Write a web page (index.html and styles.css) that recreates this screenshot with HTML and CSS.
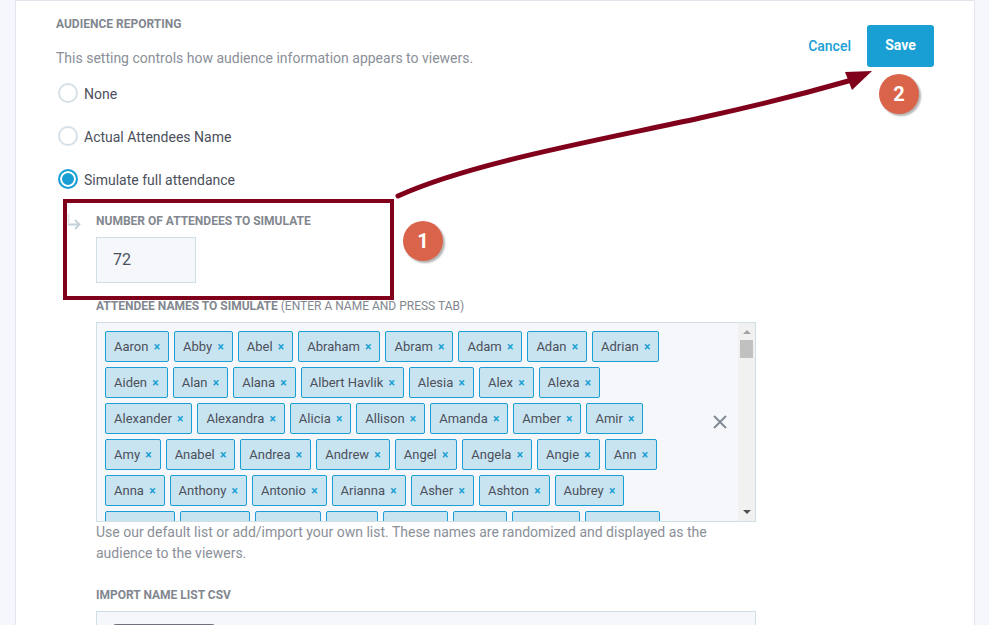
FILE: index.html
```html
<!DOCTYPE html>
<html lang="en">
<head>
<meta charset="utf-8">
<title>Audience Reporting</title>
<link rel="stylesheet" href="styles.css">
</head>
<body>
<main class="panel">
  <div class="content">
    <h2 class="label section-title">AUDIENCE REPORTING</h2>
    <p class="help intro">This setting controls how audience information appears to viewers.</p>
    <div class="radios">
      <div class="radio-row"><span class="radio"></span><span class="radio-text">None</span></div>
      <div class="radio-row"><span class="radio"></span><span class="radio-text">Actual Attendees Name</span></div>
      <div class="radio-row"><span class="radio checked"></span><span class="radio-text">Simulate full attendance</span></div>
    </div>
    <div class="nested">
      <svg class="nest-icon" width="14" height="20" viewBox="0 0 14 20" aria-hidden="true"><path d="M1.500 0V9" fill="none" stroke="#dbe4e9" stroke-width="1.500"/><path d="M1 10.500H12.500M8 6L12.500 10.500L8 15" fill="none" stroke="#c3d2da" stroke-width="1.800"/></svg>
      <div class="nested-body">
        <div class="label">NUMBER OF ATTENDEES TO SIMULATE</div>
        <div class="number-input">72</div>
        <div class="label names-label">ATTENDEE NAMES TO SIMULATE <span class="label-note">(ENTER A NAME AND PRESS TAB)</span></div>
        <div class="tag-box">
          <div class="tags">
            <div class="tag-row"><span class="tag">Aaron <i>×</i></span><span class="tag">Abby <i>×</i></span><span class="tag">Abel <i>×</i></span><span class="tag">Abraham <i>×</i></span><span class="tag">Abram <i>×</i></span><span class="tag">Adam <i>×</i></span><span class="tag">Adan <i>×</i></span><span class="tag">Adrian <i>×</i></span></div>
            <div class="tag-row"><span class="tag">Aiden <i>×</i></span><span class="tag">Alan <i>×</i></span><span class="tag">Alana <i>×</i></span><span class="tag">Albert Havlik <i>×</i></span><span class="tag">Alesia <i>×</i></span><span class="tag">Alex <i>×</i></span><span class="tag">Alexa <i>×</i></span></div>
            <div class="tag-row"><span class="tag">Alexander <i>×</i></span><span class="tag">Alexandra <i>×</i></span><span class="tag">Alicia <i>×</i></span><span class="tag">Allison <i>×</i></span><span class="tag">Amanda <i>×</i></span><span class="tag">Amber <i>×</i></span><span class="tag">Amir <i>×</i></span></div>
            <div class="tag-row"><span class="tag">Amy <i>×</i></span><span class="tag">Anabel <i>×</i></span><span class="tag">Andrea <i>×</i></span><span class="tag">Andrew <i>×</i></span><span class="tag">Angel <i>×</i></span><span class="tag">Angela <i>×</i></span><span class="tag">Angie <i>×</i></span><span class="tag">Ann <i>×</i></span></div>
            <div class="tag-row"><span class="tag">Anna <i>×</i></span><span class="tag">Anthony <i>×</i></span><span class="tag">Antonio <i>×</i></span><span class="tag">Arianna <i>×</i></span><span class="tag">Asher <i>×</i></span><span class="tag">Ashton <i>×</i></span><span class="tag">Aubrey <i>×</i></span></div>
            <div class="tag-row"><span class="tag">Audrey <i>×</i></span><span class="tag">Austen <i>×</i></span><span class="tag">Austin <i>×</i></span><span class="tag">Ava <i>×</i></span><span class="tag">Ayden <i>×</i></span><span class="tag">Axel <i>×</i></span><span class="tag">Baylee <i>×</i></span><span class="tag">Barbara <i>×</i></span></div>
          </div>
          <svg class="clear" width="16" height="16" viewBox="0 0 16 16" aria-hidden="true"><path d="M2 2L14 14M14 2L2 14" stroke="#7f8790" stroke-width="1.800" fill="none"/></svg>
          <div class="scrollbar">
            <span class="arrow-up"></span>
            <span class="thumb"></span>
            <span class="arrow-down"></span>
          </div>
        </div>
        <p class="help names-help">Use our default list or add/import your own list. These names are randomized and displayed as the audience to the viewers.</p>
        <div class="label import-label">IMPORT NAME LIST CSV</div>
        <div class="import-box"><span class="import-button"></span></div>
      </div>
    </div>
  </div>
  <div class="actions">
    <a class="cancel">Cancel</a>
    <a class="save">Save</a>
  </div>
</main>

<div class="callout-box"></div>
<svg class="callout-arrow" width="989" height="625" viewBox="0 0 989 625" aria-hidden="true">
  <path d="M398 196C470 163 600 140 700 118C760 105 810 92 852 80" fill="none" stroke="#80001c" stroke-width="5" stroke-linecap="round"/>
  <path d="M845 72L872 71L852 90Z" fill="#80001c"/>
</svg>
<div class="badge badge-one">1</div>
<div class="badge badge-two">2</div>
</body>
</html>
```
FILE: styles.css
```css
* { box-sizing: border-box; }
html, body { margin: 0; height: 625px; overflow: hidden; }
body {
  position: relative;
  background: #f5f7fc;
  font-family: Roboto, "Liberation Sans", sans-serif;
  font-size: 14px;
  color: #4b505b;
}
.panel {
  display: flex;
  justify-content: space-between;
  align-items: flex-start;
  margin-left: 15px;
  width: 960px;
  height: 625px;
  padding: 0 40px;
  background: #fff;
  border-left: 1px solid #e3e6ec;
  border-right: 1px solid #e3e6ec;
  border-top: 1px solid #e3e6ec;
}
.content { width: 700px; height: 624px; overflow: hidden; padding-top: 16px; }
.label {
  font-size: 12px;
  line-height: 14px;
  font-weight: 700;
  color: #82878f;
}
.section-title { margin: 0; }
.help { margin: 0; color: #8a8f98; line-height: 21px; }
.intro { margin-top: 17px; }
.radios { display: flex; flex-direction: column; gap: 23px; margin-top: 14px; }
.radio-row { display: flex; align-items: center; gap: 6px; height: 20px; padding-left: 2px; }
.radio-text { padding-top: 2px; }
.radio {
  width: 20px; height: 20px;
  border: 2px solid #d5e1e6;
  border-radius: 50%;
  background: #fff;
}
.radio.checked {
  border-color: #1a9fd4;
  box-shadow: inset 0 0 0 2px #fff;
  background: #1a9fd4;
}
.nested { display: flex; margin-top: 25px; margin-left: 11px; }
.nest-icon { flex: none; margin-right: 15px; }
.nested-body { width: 660px; }
.number-input {
  width: 100px; height: 46px;
  margin-top: 9px;
  padding-left: 16px;
  background: #f5f7fb;
  border: 1px solid #cfdfe6;
  font-size: 16px;
  line-height: 44px;
  color: #4b505b;
}
.names-label { margin-top: 16px; }
.label-note { font-weight: 400; }
.tag-box {
  position: relative;
  display: flex;
  justify-content: space-between;
  height: 200px;
  margin-top: 9px;
  background: #f5f7fb;
  border: 1px solid #cfdfe6;
  overflow: hidden;
}
.tags {
  display: flex;
  flex-direction: column;
  row-gap: 5px;
  width: 600px;
  height: 198px;
  overflow: hidden;
  padding: 8px 0 0 8px;
}
.tag-row { display: flex; flex: none; column-gap: 5px; }
.tag {
  display: block;
  flex: none;
  height: 31px;
  padding: 0 8px;
  background: #c9e4f1;
  border: 1px solid #1a9fd4;
  border-radius: 2px;
  font-size: 13px;
  line-height: 29px;
  white-space: nowrap;
  color: #4b505b;
}
.tag i {
  font-style: normal;
  font-weight: 700;
  font-size: 12px;
  color: #1a9fd4;
  margin-left: 2px;
}
.clear { position: absolute; right: 27px; top: 91px; }
.scrollbar {
  position: relative;
  flex: none;
  width: 17px;
  background: #f1f1f1;
}
.thumb { position: absolute; left: 2px; top: 17px; width: 13px; height: 18px; background: #c1c1c1; }
.arrow-up, .arrow-down {
  position: absolute;
  left: 5px;
  width: 0; height: 0;
  border-left: 4px solid transparent;
  border-right: 4px solid transparent;
}
.arrow-up { top: 7px; border-bottom: 4px solid #a3a3a3; }
.arrow-down { bottom: 7px; border-top: 4px solid #505050; }
.names-help { margin-top: 0; }
.import-label { margin-top: 24px; }
.import-box {
  height: 60px;
  margin-top: 9px;
  padding: 12px 0 0 16px;
  background: #f5f7fb;
  border: 1px solid #cfdfe6;
}
.import-button { display: block; width: 102px; height: 30px; background: #6e727a; border-radius: 3px; }
.actions { display: flex; align-items: center; gap: 16px; margin-top: 24px; }
.cancel { color: #1a9fd4; font-weight: 500; }
.save {
  display: block;
  width: 67px; height: 42px;
  background: #1a9fd4;
  border-radius: 3px;
  color: #fff;
  font-weight: 700;
  text-align: center;
  line-height: 41px;
}
.callout-box {
  position: absolute;
  left: 63px; top: 199px;
  width: 331px; height: 101px;
  border: 4px solid #80001c;
}
.callout-arrow { position: absolute; left: 0; top: 0; }
.badge {
  position: absolute;
  width: 40px; height: 40px;
  border-radius: 50%;
  background: #d9644a;
  box-shadow: 2px 2px 2px rgba(0,0,0,.3);
  color: #fff;
  font-size: 20px;
  font-weight: 700;
  line-height: 40px;
  text-align: center;
}
.badge-one { left: 403px; top: 221px; }
.badge-two { left: 879px; top: 74px; }
```
